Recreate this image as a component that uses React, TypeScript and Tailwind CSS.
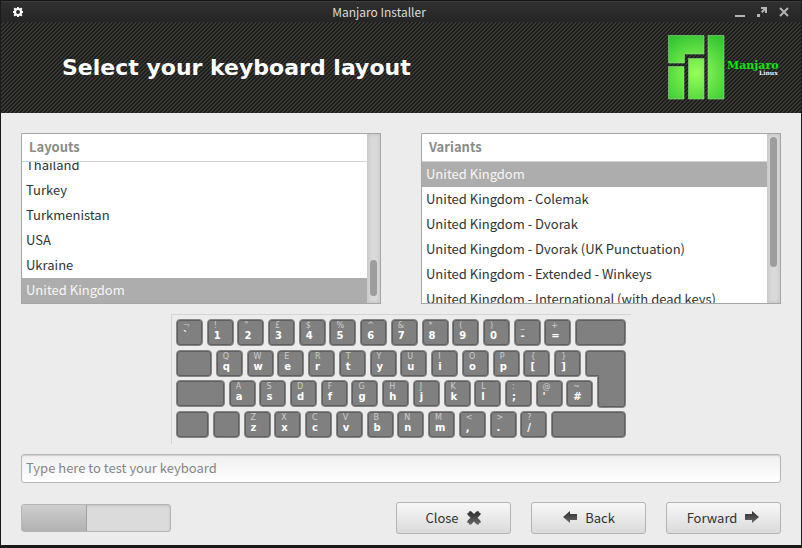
import React from "react";

type KeyDef = { w?: number; top?: string; main?: string; kind?: "enter" | "spacer" };

const WIDTHS: Record<number, string> = {
  27: "w-[27px]",
  29: "w-[29px]",
  33: "w-[33px]",
  36: "w-9",
  41: "w-[41px]",
  49: "w-[49px]",
  51: "w-[51px]",
  75: "w-[75px]",
};

const pair = (s: string): KeyDef => ({ top: s[0], main: s[1] });

const ROWS: KeyDef[][] = [
  [..."¬` !1 \"2 £3 $4 %5 ^6 &7 *8 (9 )0 _- +=".split(" ").map(pair), { w: 51 }],
  [{ w: 36 }, ..."Qq Ww Ee Rr Tt Yy Uu Ii Oo Pp {[ }]".split(" ").map(pair), { w: 41, kind: "enter" }],
  [{ w: 49 }, ..."Aa Ss Dd Ff Gg Hh Jj Kk Ll :; @' ~#".split(" ").map(pair), { w: 29, kind: "spacer" }],
  [{ w: 33 }, {}, ..."Zz Xx Cc Vv Bb Nn Mm <, >. ?/".split(" ").map(pair), { w: 75 }],
];

function Key({ w = 27, top, main, kind }: KeyDef) {
  const width = WIDTHS[w];
  if (kind === "spacer") return <div className={`${width} h-[27px] shrink-0`} />;
  if (kind === "enter")
    return (
      <div className={`${width} relative h-[27px] shrink-0`}>
        <svg className="absolute top-0 right-0" width="41" height="58" viewBox="0 0 41 58">
          <path
            d="M3.500 .5H37.500Q40.500 .5 40.500 3.500V54.500Q40.500 57.500 37.500 57.500H15.500Q12.500 57.500 12.500 54.500V26.500H3.500Q.5 26.500 .5 23.500V3.500Q.5 .5 3.500 .5Z"
            fill="#808080"
            stroke="#858585"
          />
          <path
            d="M3.500 1.500H37.500Q39.500 1.500 39.500 3.500V54.500Q39.500 56.500 37.500 56.500H15.500Q13.500 56.500 13.500 54.500V25.500H3.500Q1.500 25.500 1.500 23.500V3.500Q1.500 1.500 3.500 1.500Z"
            fill="#808080"
            stroke="#5f5f5f"
          />
        </svg>
      </div>
    );
  return (
    <div
      className={`${width} h-[27px] shrink-0 rounded-[4px] border border-[#858585] bg-[#808080] pt-[2px] pl-[6px] shadow-[inset_0_0_0_1px_#5f5f5f]`}
    >
      <span className="block h-2 text-[8px] leading-[8px] text-[#cdcdcd]">{top}</span>
      <span className="block h-3 text-[10px] leading-[12px] font-bold text-white">{main}</span>
    </div>
  );
}

function Keyboard() {
  return (
    <div className="mx-auto mt-[10px] h-[130px] w-[460px] border-t border-l border-[#d4d4d4] pt-1 pl-1 font-['DejaVu_Sans',sans-serif]">
      <div className="flex h-[119px] w-[450px] flex-col justify-between">
        {ROWS.map((row, i) => (
          <div key={i} className="flex justify-between">
            {row.map((k, j) => (
              <Key key={j} {...k} />
            ))}
          </div>
        ))}
      </div>
    </div>
  );
}

type ListProps = { title: string; items: string[]; selected: string; atEnd?: boolean };

function ListPanel({ title, items, selected, atEnd }: ListProps) {
  return (
    <section className="flex h-[171px] min-w-0 flex-1 border border-[#a5a7a7] bg-white">
      <div className="flex min-w-0 flex-1 flex-col">
        <h2 className="h-7 shrink-0 border-b border-[#d0d0d0] pl-[7px] text-[13px] leading-[26px] font-bold text-[#8b8b86]">
          {title}
        </h2>
        <ul
          role="listbox"
          aria-label={title}
          className={`flex min-h-0 flex-1 flex-col overflow-hidden ${atEnd ? "justify-end" : "justify-start"}`}
        >
          {items.map((item) => (
            <li
              key={item}
              role="option"
              aria-selected={item === selected}
              className={`h-[25px] shrink-0 pl-1 text-[13px] leading-6 whitespace-nowrap ${
                item === selected ? "bg-[#adadad] text-[#f7f7f7]" : "text-[#2e3436]"
              }`}
            >
              {item}
            </li>
          ))}
        </ul>
      </div>
      <div
        className={`flex w-[13px] flex-col items-center border-l border-[#cccccc] bg-[#dadada] pr-px shadow-[inset_0_0_4px_#bdbdbd] ${
          atEnd ? "justify-end pb-[7px]" : "justify-start pt-[3px]"
        }`}
      >
        <div className={`w-[7px] rounded-full bg-[#9b9d9e] ${atEnd ? "h-9" : "h-[130px]"}`} />
      </div>
    </section>
  );
}

function Logo() {
  return (
    <svg width="112" height="66" viewBox="0 0 112 66" role="img" aria-label="Manjaro Linux">
      <defs>
        <radialGradient id="leaf" gradientUnits="userSpaceOnUse" cx="28" cy="38" r="42">
          <stop offset="0" stopColor="#96ff57" />
          <stop offset="1" stopColor="#33c533" />
        </radialGradient>
      </defs>
      <g fill="url(#leaf)" stroke="#8fdc86" strokeOpacity="0.6" strokeWidth="1">
        <path d="M.5 .5H36V19H16.500V28H.5Z" />
        <path d="M.5 31.500H16V64H.5Z" />
        <path d="M20.500 23.500H36V64H20.500Z" />
        <path d="M40 .5H56V64H40Z" />
      </g>
      <text x="59" y="34" fill="#0ce80c" fontSize="11" fontWeight="700" fontFamily="DejaVu Serif, serif">
        Manjaro
      </text>
      <text x="91" y="40" fill="#f2f2f2" fontSize="6" fontWeight="700" fontFamily="DejaVu Serif, serif">
        Linux
      </text>
    </svg>
  );
}

function GearIcon() {
  return (
    <svg width="10" height="10" viewBox="0 0 10 10" fill="none" stroke="#ffffff">
      <circle cx="5" cy="5" r="3" strokeWidth="2" />
      <path
        d="M5 0V2M5 8V10M0 5H2M8 5H10M1.200 1.200L2.500 2.500M7.500 7.500L8.800 8.800M8.800 1.200L7.500 2.500M2.500 7.500L1.200 8.800"
        strokeWidth="2"
      />
    </svg>
  );
}

function GlyphShade({ id }: { id: string }) {
  return (
    <defs>
      <linearGradient id={id} x1="0" y1="0" x2="0" y2="1">
        <stop offset="0" stopColor="#2c2c2c" />
        <stop offset="1" stopColor="#6a6a6a" />
      </linearGradient>
    </defs>
  );
}

function CloseGlyph() {
  return (
    <svg width="16" height="16" viewBox="0 0 16 16">
      <GlyphShade id="shade-close" />
      <path
        d="M3.500 1L5.500 1.500L8 4L10.500 1.500L12.500 1L13 2.500L14.800 3.200L14.300 5L11.500 7.700L14.300 10.500L15 12.500L13.300 13L12.600 14.800L10.500 14.200L8 11.500L5.500 14.200L3.400 14.800L2.700 13L1 12.500L1.700 10.500L4.500 7.700L1.700 5L1.200 3.200L3 2.500Z"
        fill="url(#shade-close)"
      />
    </svg>
  );
}

function ArrowGlyph({ left }: { left?: boolean }) {
  const id = left ? "shade-back" : "shade-forward";
  return (
    <svg width="16" height="16" viewBox="0 0 16 16">
      <GlyphShade id={id} />
      <path
        d={left ? "M1 7L8 1V4H15V10H8V13Z" : "M15 7L8 1V4H1V10H8V13Z"}
        fill={left ? "url(#shade-back)" : "url(#shade-forward)"}
      />
    </svg>
  );
}

function ActionButton({ children }: { children: React.ReactNode }) {
  return (
    <button
      type="button"
      className="flex h-8 w-[115px] items-center justify-center gap-[7px] rounded-[3px] border border-[#b3b4b4] bg-linear-to-b from-[#f8f8f8] to-[#dadada] text-[13px] leading-5 text-[#2e3436]"
    >
      {children}
    </button>
  );
}

export default function App() {
  return (
    <div className="flex min-h-screen flex-col border-x border-b-[3px] border-[#1c1b1c] bg-[#ececec] font-['Noto_Sans_CJK_SC','Noto_Sans',sans-serif]">
      <header className="flex h-[22px] items-center border-t border-[#141414] bg-linear-to-b from-[#303030] to-[#262626] shadow-[inset_0_1px_0_#3d3d3d]">
        <button type="button" aria-label="Window menu" className="ml-3 w-[10px]">
          <GearIcon />
        </button>
        <h1 className="flex-1 text-center text-[12px] leading-5 text-[#dcdcdc]">Manjaro Installer</h1>
        <div className="mr-3 flex items-center justify-end gap-3 text-[#b4b4b4]">
          <button type="button" aria-label="Minimize">
            <svg width="10" height="10" viewBox="0 0 10 10">
              <path d="M0 8H10V10H0Z" fill="currentColor" />
            </svg>
          </button>
          <button type="button" aria-label="Maximize">
            <svg width="10" height="10" viewBox="0 0 10 10">
              <path d="M4 0H10V6H8V3.500L5.500 6L4 4.500L6.500 2H4ZM0 7H3V10H0Z" fill="currentColor" />
            </svg>
          </button>
          <button type="button" aria-label="Close window">
            <svg width="10" height="10" viewBox="0 0 10 10">
              <path d="M1 1L9 9M9 1L1 9" stroke="currentColor" strokeWidth="2" />
            </svg>
          </button>
        </div>
      </header>

      <div className="flex h-[91px] items-center justify-between bg-[linear-gradient(135deg,#1c1c1a_25%,#383835_25%,#383835_50%,#1c1c1a_50%,#1c1c1a_75%,#383835_75%)] bg-size-[4px_4px] pr-[21px] pl-[61px]">
        <h2 className="font-['DejaVu_Sans',sans-serif] text-[22px] leading-7 font-bold text-white">
          Select your keyboard layout
        </h2>
        <Logo />
      </div>

      <main className="px-5 pt-5">
        <div className="flex gap-10">
          <ListPanel
            title="Layouts"
            items={["Thailand", "Turkey", "Turkmenistan", "USA", "Ukraine", "United Kingdom"]}
            selected="United Kingdom"
            atEnd
          />
          <ListPanel
            title="Variants"
            items={[
              "United Kingdom",
              "United Kingdom - Colemak",
              "United Kingdom - Dvorak",
              "United Kingdom - Dvorak (UK Punctuation)",
              "United Kingdom - Extended - Winkeys",
              "United Kingdom - International (with dead keys)",
            ]}
            selected="United Kingdom"
          />
        </div>

        <Keyboard />

        <input
          type="text"
          aria-label="Test your keyboard"
          placeholder="Type here to test your keyboard"
          className="mt-[10px] block h-[29px] w-full rounded-[3px] border border-[#b5b6b6] bg-linear-to-b from-[#efefef] to-white px-1 pb-[2px] text-[13px] text-[#2e3436] shadow-[inset_0_1px_1px_#d0d0d0] placeholder:text-[#858786]"
        />

        <div className="mt-[19px] flex items-center justify-between">
          <div
            role="progressbar"
            aria-label="Installation progress"
            aria-valuenow={44}
            className="h-7 w-[150px] rounded-[3px] border border-[#b4b5b5] bg-[#dbdbdb] shadow-[inset_0_1px_3px_#c0c0c0]"
          >
            <div className="h-full w-[65px] rounded-l-[2px] border-r border-[#a0a0a0] bg-linear-to-b from-[#cecece] to-[#b2b2b2]" />
          </div>
          <div className="flex gap-5">
            <ActionButton>
              Close <CloseGlyph />
            </ActionButton>
            <ActionButton>
              <ArrowGlyph left /> Back
            </ActionButton>
            <ActionButton>
              Forward <ArrowGlyph />
            </ActionButton>
          </div>
        </div>
      </main>
    </div>
  );
}
